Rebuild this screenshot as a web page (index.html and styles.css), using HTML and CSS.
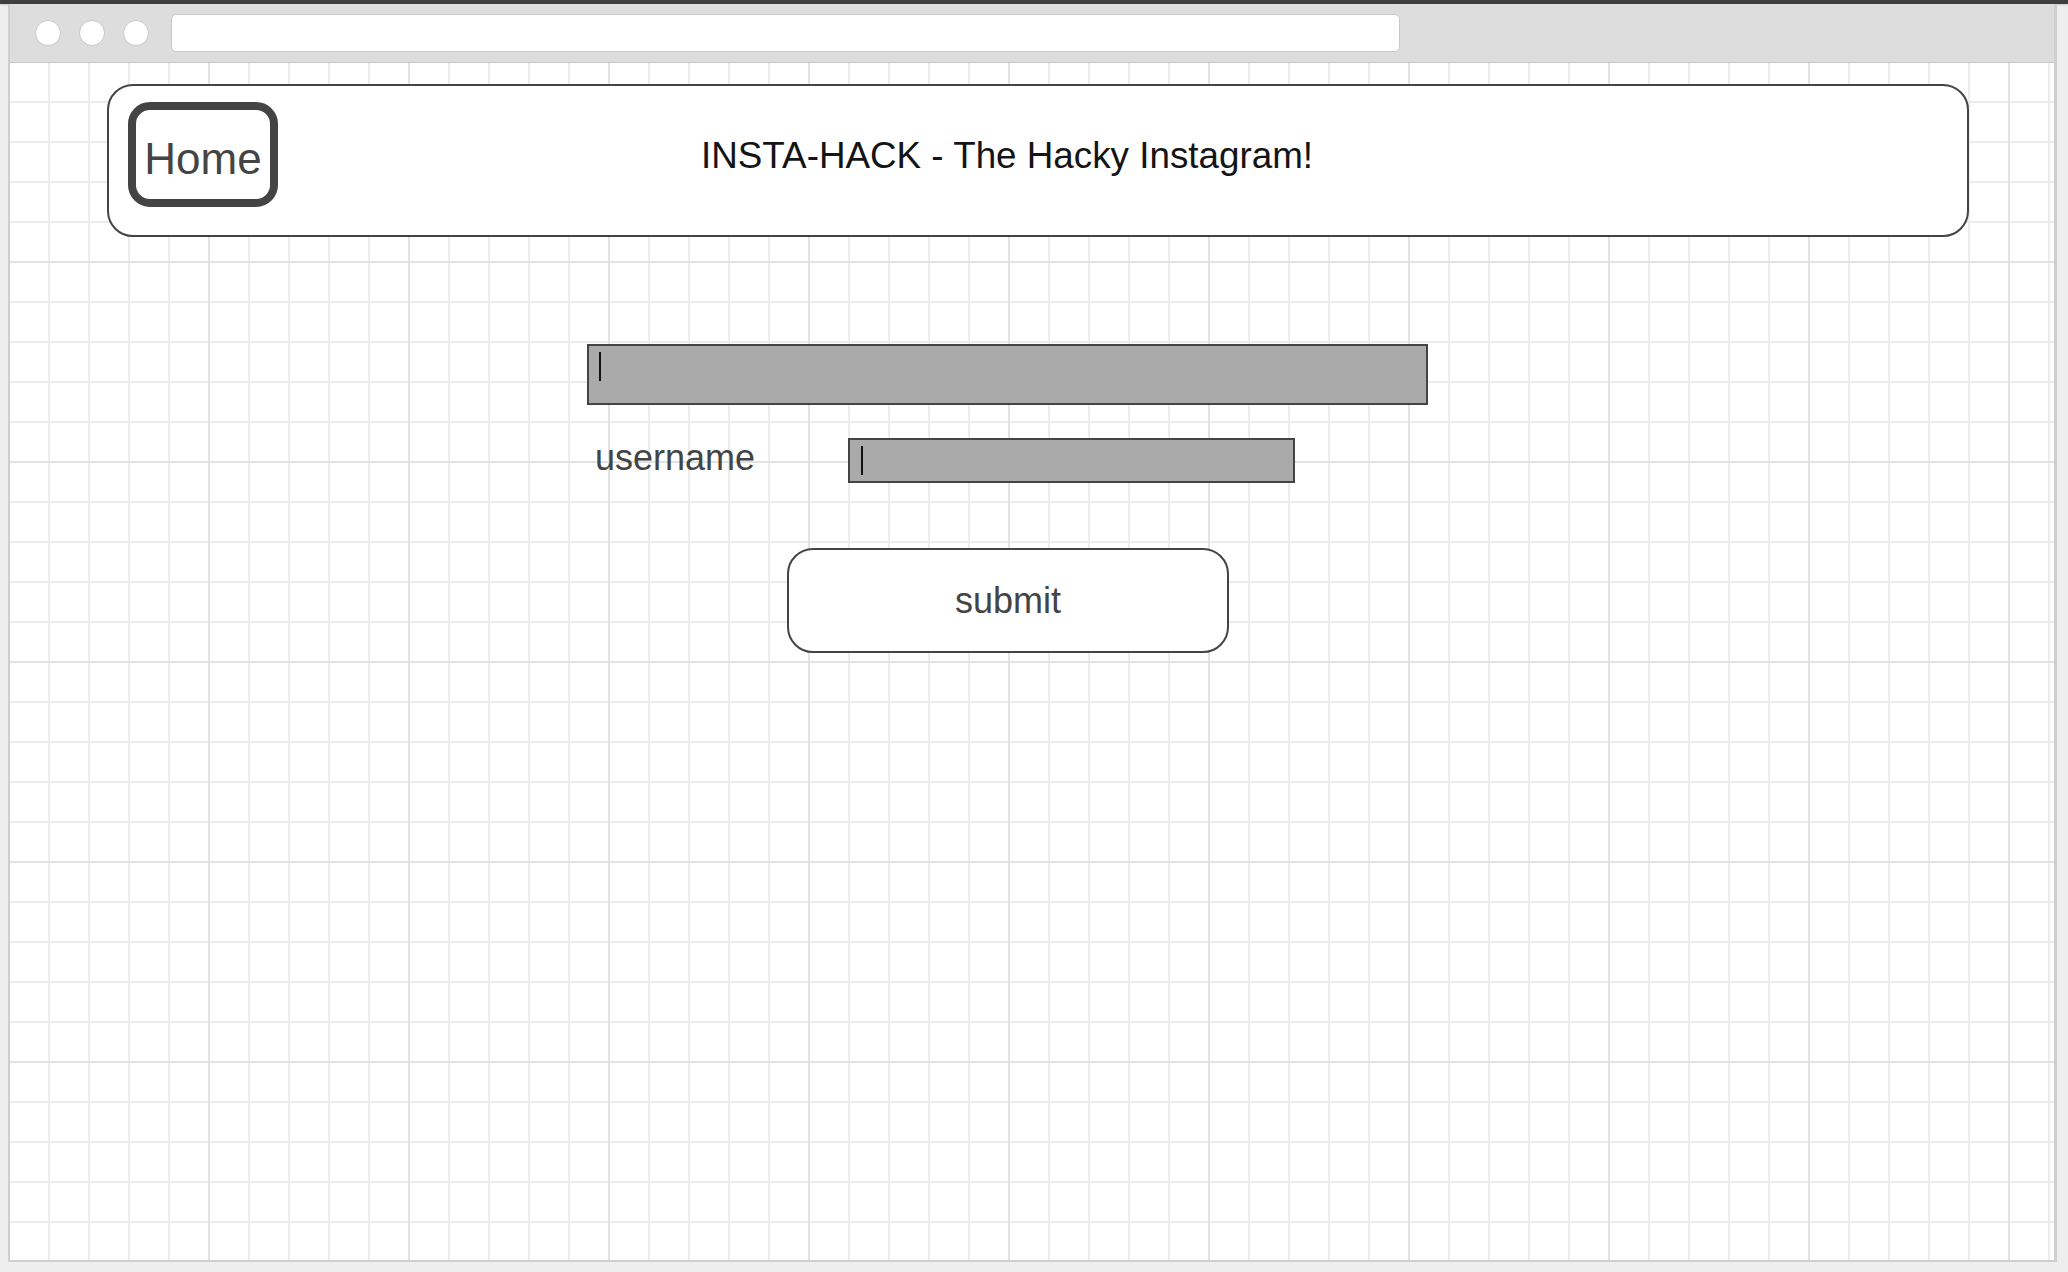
FILE: index.html
```html
<!DOCTYPE html>
<html>
<head>
<meta charset="utf-8">
<link rel="stylesheet" href="styles.css">
</head>
<body>
<div class="topbar"></div>
<div class="window">
  <div class="toolbar">
    <span class="dot"></span>
    <span class="dot"></span>
    <span class="dot"></span>
    <div class="urlbar"></div>
  </div>
  <div class="canvas">
    <header class="header">
      <div class="home">Home</div>
      <div class="title">INSTA-HACK - The Hacky Instagram!</div>
    </header>
    <div class="bigfield"><span class="caret"></span></div>
    <div class="row">
      <div class="label">username</div>
      <div class="smallfield"><span class="caret"></span></div>
    </div>
    <div class="submit">submit</div>
  </div>
</div>
</body>
</html>
```
FILE: styles.css
```css
html, body {
  margin: 0;
  padding: 0;
}
body {
  background: #eeeeee;
  font-family: "Liberation Sans", Arial, sans-serif;
  width: 2068px;
  height: 1272px;
  overflow: hidden;
}
.topbar {
  height: 4px;
  background: #3f3f3f;
  box-shadow: 0 1px 2px rgba(0,0,0,0.15);
}
.window {
  margin-left: 8px;
  width: 2049px;
  box-sizing: border-box;
  border-left: 2px solid #cfcfcf;
  border-right: 3px solid #cfcfcf;
  border-bottom: 2px solid #cfcfcf;
}
.toolbar {
  height: 58px;
  background: #dddddd;
  border-bottom: 1px solid #c8c8c8;
  display: flex;
  align-items: center;
  padding-left: 25px;
}
.dot {
  width: 26px;
  height: 26px;
  box-sizing: border-box;
  border-radius: 50%;
  background: #ffffff;
  border: 1px solid #c8c8c8;
  margin-right: 18px;
}
.dot:nth-child(3) {
  margin-right: 22px;
}
.urlbar {
  width: 1229px;
  height: 38px;
  box-sizing: border-box;
  background: #ffffff;
  border: 1px solid #c8c8c8;
  border-radius: 5px;
}
.canvas {
  height: 1197px;
  background-color: #ffffff;
  background-image:
    linear-gradient(to right, transparent 198px, #e2e2e2 198px),
    linear-gradient(to bottom, transparent 198px, #e2e2e2 198px),
    linear-gradient(to right, transparent 38px, #ececec 38px),
    linear-gradient(to bottom, transparent 38px, #ececec 38px);
  background-size: 200px 200px, 200px 200px, 40px 40px, 40px 40px;
  padding-top: 21px;
  box-sizing: border-box;
  overflow: hidden;
}
.header {
  margin-left: 97px;
  width: 1862px;
  height: 153px;
  box-sizing: border-box;
  border: 2px solid #444444;
  border-radius: 26px;
  background: #ffffff;
  display: flex;
  align-items: flex-start;
  padding-top: 16px;
  padding-left: 19px;
}
.home {
  width: 150px;
  height: 105px;
  box-sizing: border-box;
  border: 8px solid #444444;
  border-radius: 22px;
  font-size: 44px;
  line-height: 44px;
  padding-top: 27px;
  text-align: center;
  color: #444444;
  background: #ffffff;
}
.title {
  margin-left: 423px;
  margin-top: 35px;
  font-size: 36.8px;
  line-height: 37px;
  color: #141414;
  white-space: nowrap;
}
.bigfield {
  margin-left: 577px;
  margin-top: 107px;
  width: 841px;
  height: 61px;
  box-sizing: border-box;
  border: 2px solid #444444;
  background: #aaaaaa;
  padding-left: 10px;
  padding-top: 6px;
}
.caret {
  display: block;
  width: 2px;
  height: 29px;
  background: #111111;
}
.row {
  display: flex;
  align-items: flex-start;
  margin-left: 577px;
  margin-top: 33px;
}
.label {
  width: 253px;
  margin-left: 8px;
  margin-top: 2px;
  font-size: 36px;
  line-height: 36px;
  color: #444444;
}
.smallfield {
  width: 447px;
  height: 45px;
  box-sizing: border-box;
  border: 2px solid #444444;
  background: #aaaaaa;
  padding-left: 11px;
  padding-top: 6px;
}
.submit {
  margin-left: 777px;
  margin-top: 65px;
  width: 442px;
  height: 105px;
  box-sizing: border-box;
  border: 2px solid #444444;
  border-radius: 26px;
  background: #ffffff;
  display: flex;
  align-items: center;
  justify-content: center;
  font-size: 36px;
  line-height: 36px;
  color: #444444;
}
```
